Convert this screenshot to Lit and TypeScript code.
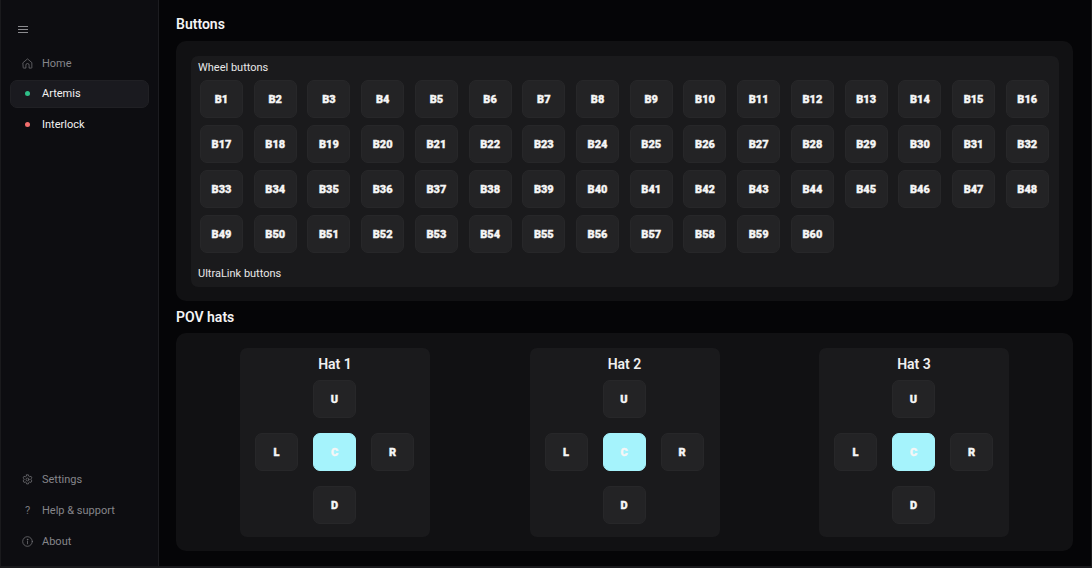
import { LitElement, html, css, svg } from "lit";
import { customElement } from "lit/decorators.js";

const ic = (c: unknown) => html`<svg class="ic" viewBox="0 0 24 24" fill="none" stroke="currentColor" stroke-width="1.6" stroke-linecap="round" stroke-linejoin="round">${c}</svg>`;
const home = ic(svg`<path d="M2.500 10 12 2l9.500 8v11a1 1 0 0 1-1 1H15.500v-6.500a3.500 3.500 0 0 0-7 0V22H3.500a1 1 0 0 1-1-1z"/>`);
const gear = ic(svg`<circle cx="12" cy="12" r="3.200"/><path d="M10 1.800h4l.7 3 2 1.100 3-.9 2 3.400-2.300 2.100v2.300l2.300 2.100-2 3.400-3-.9-2 1.200-.7 3h-4l-.7-3-2-1.200-3 .9-2-3.400 2.300-2.100v-2.300L2.300 8.400l2-3.400 3 .9 2-1.100z"/>`);
const info = ic(svg`<circle cx="12" cy="12" r="10.500"/><path d="M12 11v6"/><circle cx="12" cy="7.500" r=".7" fill="currentColor"/>`);
const menu = html`<svg class="menu" viewBox="0 0 10 8" fill="none" stroke="currentColor" stroke-width="1"><path d="M0 .500h10M0 3.500h10M0 6.500h10"/></svg>`;

@customElement("app-root")
export class AppRoot extends LitElement {
  static styles = css`
    :host { display: flex; width: 1092px; height: 568px; overflow: hidden; background: #050507; color: #fff;
      font-family: Roboto, "Noto Sans", sans-serif; box-sizing: border-box; border: 1px solid #1a1a1d; border-top: 0; border-bottom-width: 2px; }
    * { box-sizing: border-box; }
    .side { width: 158px; flex: none; background: #0d0d11; border-right: 1px solid #1c1c20;
      display: flex; flex-direction: column; padding: 26px 9px 11px 9px; }
    .menu { width: 10px; height: 8px; margin: 0 0 0 8px; color: #8b8b8f; display: block; flex: none; }
    .nav { display: flex; flex-direction: column; gap: 3px; margin-top: 15px; }
    .nav.top { gap: 2.5px; }
    .nav.bottom { margin-top: auto; }
    .item { height: 28px; display: flex; align-items: center; gap: 9px; padding-left: 11px; font-size: 11px; border-radius: 7px; color: #85858a; border: 1px solid transparent; }
    .item.live { color: #f2f2f2; }
    .item.sel { background: #1a1a1f; border-color: #202024; }
    .slot { width: 11px; height: 12px; display: flex; align-items: center; justify-content: center; flex: none; }
    .ic { width: 11px; height: 11px; display: block; color: #77777b; }
    .q { font-size: 11px; color: #77777b; }
    .dot { width: 5px; height: 5px; border-radius: 50%; }
    .dot.g { background: #2fbf88; }
    .dot.r { background: #f26d6d; }
    .main { flex: 1; min-width: 0; padding: 14px 18px 0 17px; }
    h2 { margin: 0; font-size: 14px; line-height: 20px; font-weight: 600; color: #f4f4f4; }
    .h-pov { margin-top: 6px; }
    .panel { background: #111113; border-radius: 10px; }
    .buttons { margin-top: 7px; height: 260px; padding: 15px 14px 15px 15px; }
    .inner { background: #1a1a1c; border-radius: 7px; height: 231px; padding: 5px 10px 0 7px; }
    .lab { font-size: 11px; line-height: 14px; color: #e8e8e8; }
    .grid { display: grid; grid-template-columns: repeat(16, 43px); justify-content: space-between; row-gap: 7px; margin: 5px 0 0 2px; }
    .b { height: 38px; width: 43px; background: #232325; border: 1px solid #272729; border-radius: 7px; display: flex; align-items: center; justify-content: center;
      padding-top: 1px; font-family: Roboto, sans-serif; font-size: 11px; font-weight: 900; color: #f6f6f6; -webkit-text-stroke: 0.35px #f6f6f6; }
    .b.on { background: #a5f3fc; border-color: #a5f3fc; }
    .ultra { margin-top: 14px; }
    .pov { margin-top: 6px; height: 218px; display: flex; justify-content: center; gap: 99.5px; padding-top: 15px; }
    .hat { width: 190px; height: 189px; background: #1a1a1c; border-radius: 7px; display: flex; flex-direction: column; align-items: center; padding-top: 6px; }
    .hat h3 { margin: 0; font-size: 14px; line-height: 20px; font-weight: 600; color: #f0f0f0; }
    .pad { display: grid; grid-template-columns: repeat(3, 43px); grid-auto-rows: 38px; gap: 15px; margin: 6px 1px 0 0; }
    .up, .down { grid-column: 2; }
    .left { grid-column: 1; }
  `;

  item(label: string, lead: unknown, cls = "") {
    return html`<div class="item ${cls}"><span class="slot">${lead}</span>${label}</div>`;
  }

  hat(n: number) {
    return html`<div class="hat"><h3>Hat ${n}</h3><div class="pad">
      <div class="b up">U</div><div class="b left">L</div><div class="b on">C</div><div class="b">R</div><div class="b down">D</div>
    </div></div>`;
  }

  render() {
    const btns = Array.from({ length: 60 }, (_, i) => `B${i + 1}`);
    return html`
      <aside class="side">
        ${menu}
        <div class="nav top">
          ${this.item("Home", home)}
          ${this.item("Artemis", html`<span class="dot g"></span>`, "live sel")}
          ${this.item("Interlock", html`<span class="dot r"></span>`, "live")}
        </div>
        <div class="nav bottom">
          ${this.item("Settings", gear)}
          ${this.item("Help & support", html`<span class="q">?</span>`)}
          ${this.item("About", info)}
        </div>
      </aside>
      <main class="main">
        <h2>Buttons</h2>
        <section class="panel buttons"><div class="inner">
          <div class="lab">Wheel buttons</div>
          <div class="grid">${btns.map((b) => html`<div class="b">${b}</div>`)}</div>
          <div class="lab ultra">UltraLink buttons</div>
        </div></section>
        <h2 class="h-pov">POV hats</h2>
        <section class="panel pov">${[1, 2, 3].map((n) => this.hat(n))}</section>
      </main>
    `;
  }
}
